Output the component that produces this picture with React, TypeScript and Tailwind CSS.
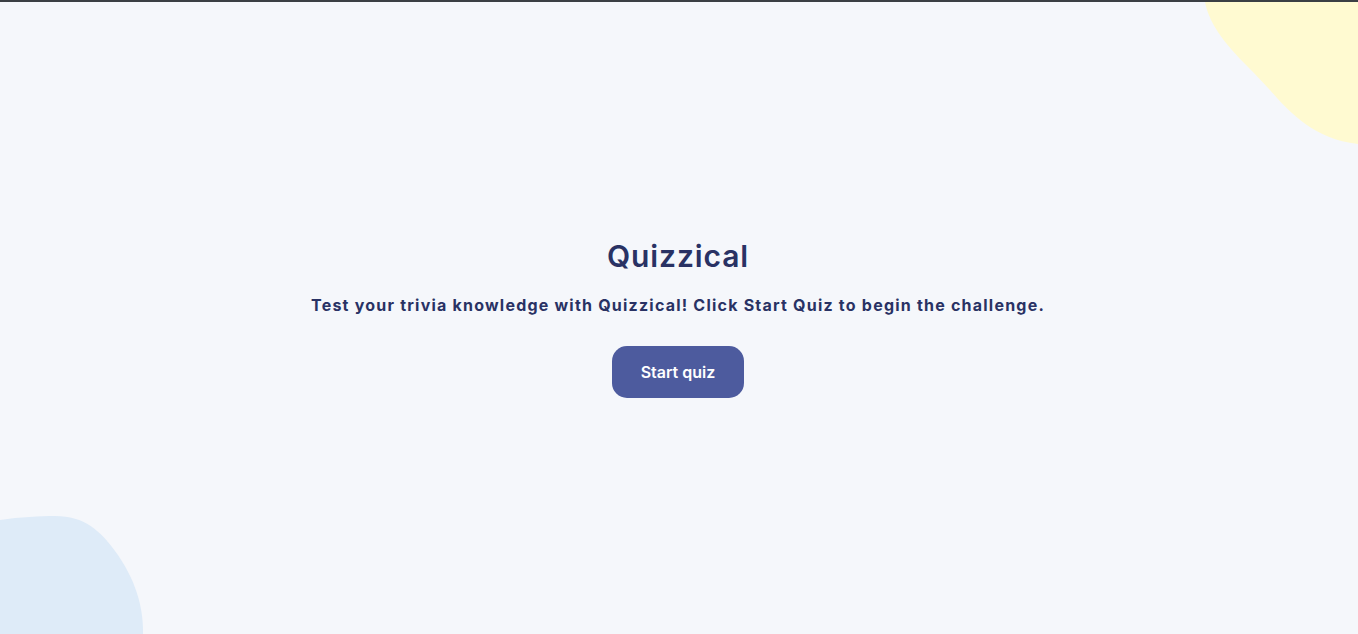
import React from 'react';

function BlobTop() {
  return (
    <svg className="absolute top-0 right-0" width="160" height="145" viewBox="0 0 160 145">
      <path d="M7 0 C12 25 30 45 55 70 C85 100 105 135 160 142 L160 0 Z" fill="#FFFAD1" />
    </svg>
  );
}

function BlobBottom() {
  return (
    <svg className="absolute bottom-0 left-0" width="150" height="120" viewBox="0 0 150 120">
      <path d="M0 6 C20 3 40 2 55 2 C85 2 100 17 115 37 C135 64 143 92 143 117 L143 120 L0 120 Z" fill="#DEEBF8" />
    </svg>
  );
}

export default function App() {
  return (
    <div className="relative w-full h-screen overflow-hidden bg-[#F5F7FB] border-t-2 border-[#3b3f44] font-['Inter',sans-serif] text-[#293264]">
      <BlobTop />
      <BlobBottom />
      <main className="relative h-full flex flex-col items-center justify-center pt-[3px] pr-[2px]">
        <h1 className="text-[30px] font-semibold tracking-[0.03em] leading-none">Quizzical</h1>
        <p className="mt-[22px] text-base font-bold tracking-[0.076em]">
          Test your trivia knowledge with Quizzical! Click Start Quiz to begin the challenge.
        </p>
        <button className="mt-[29px] w-[132px] h-[52px] rounded-[15px] bg-[#4D5B9E] text-white text-base font-semibold">
          Start quiz
        </button>
      </main>
    </div>
  );
}
